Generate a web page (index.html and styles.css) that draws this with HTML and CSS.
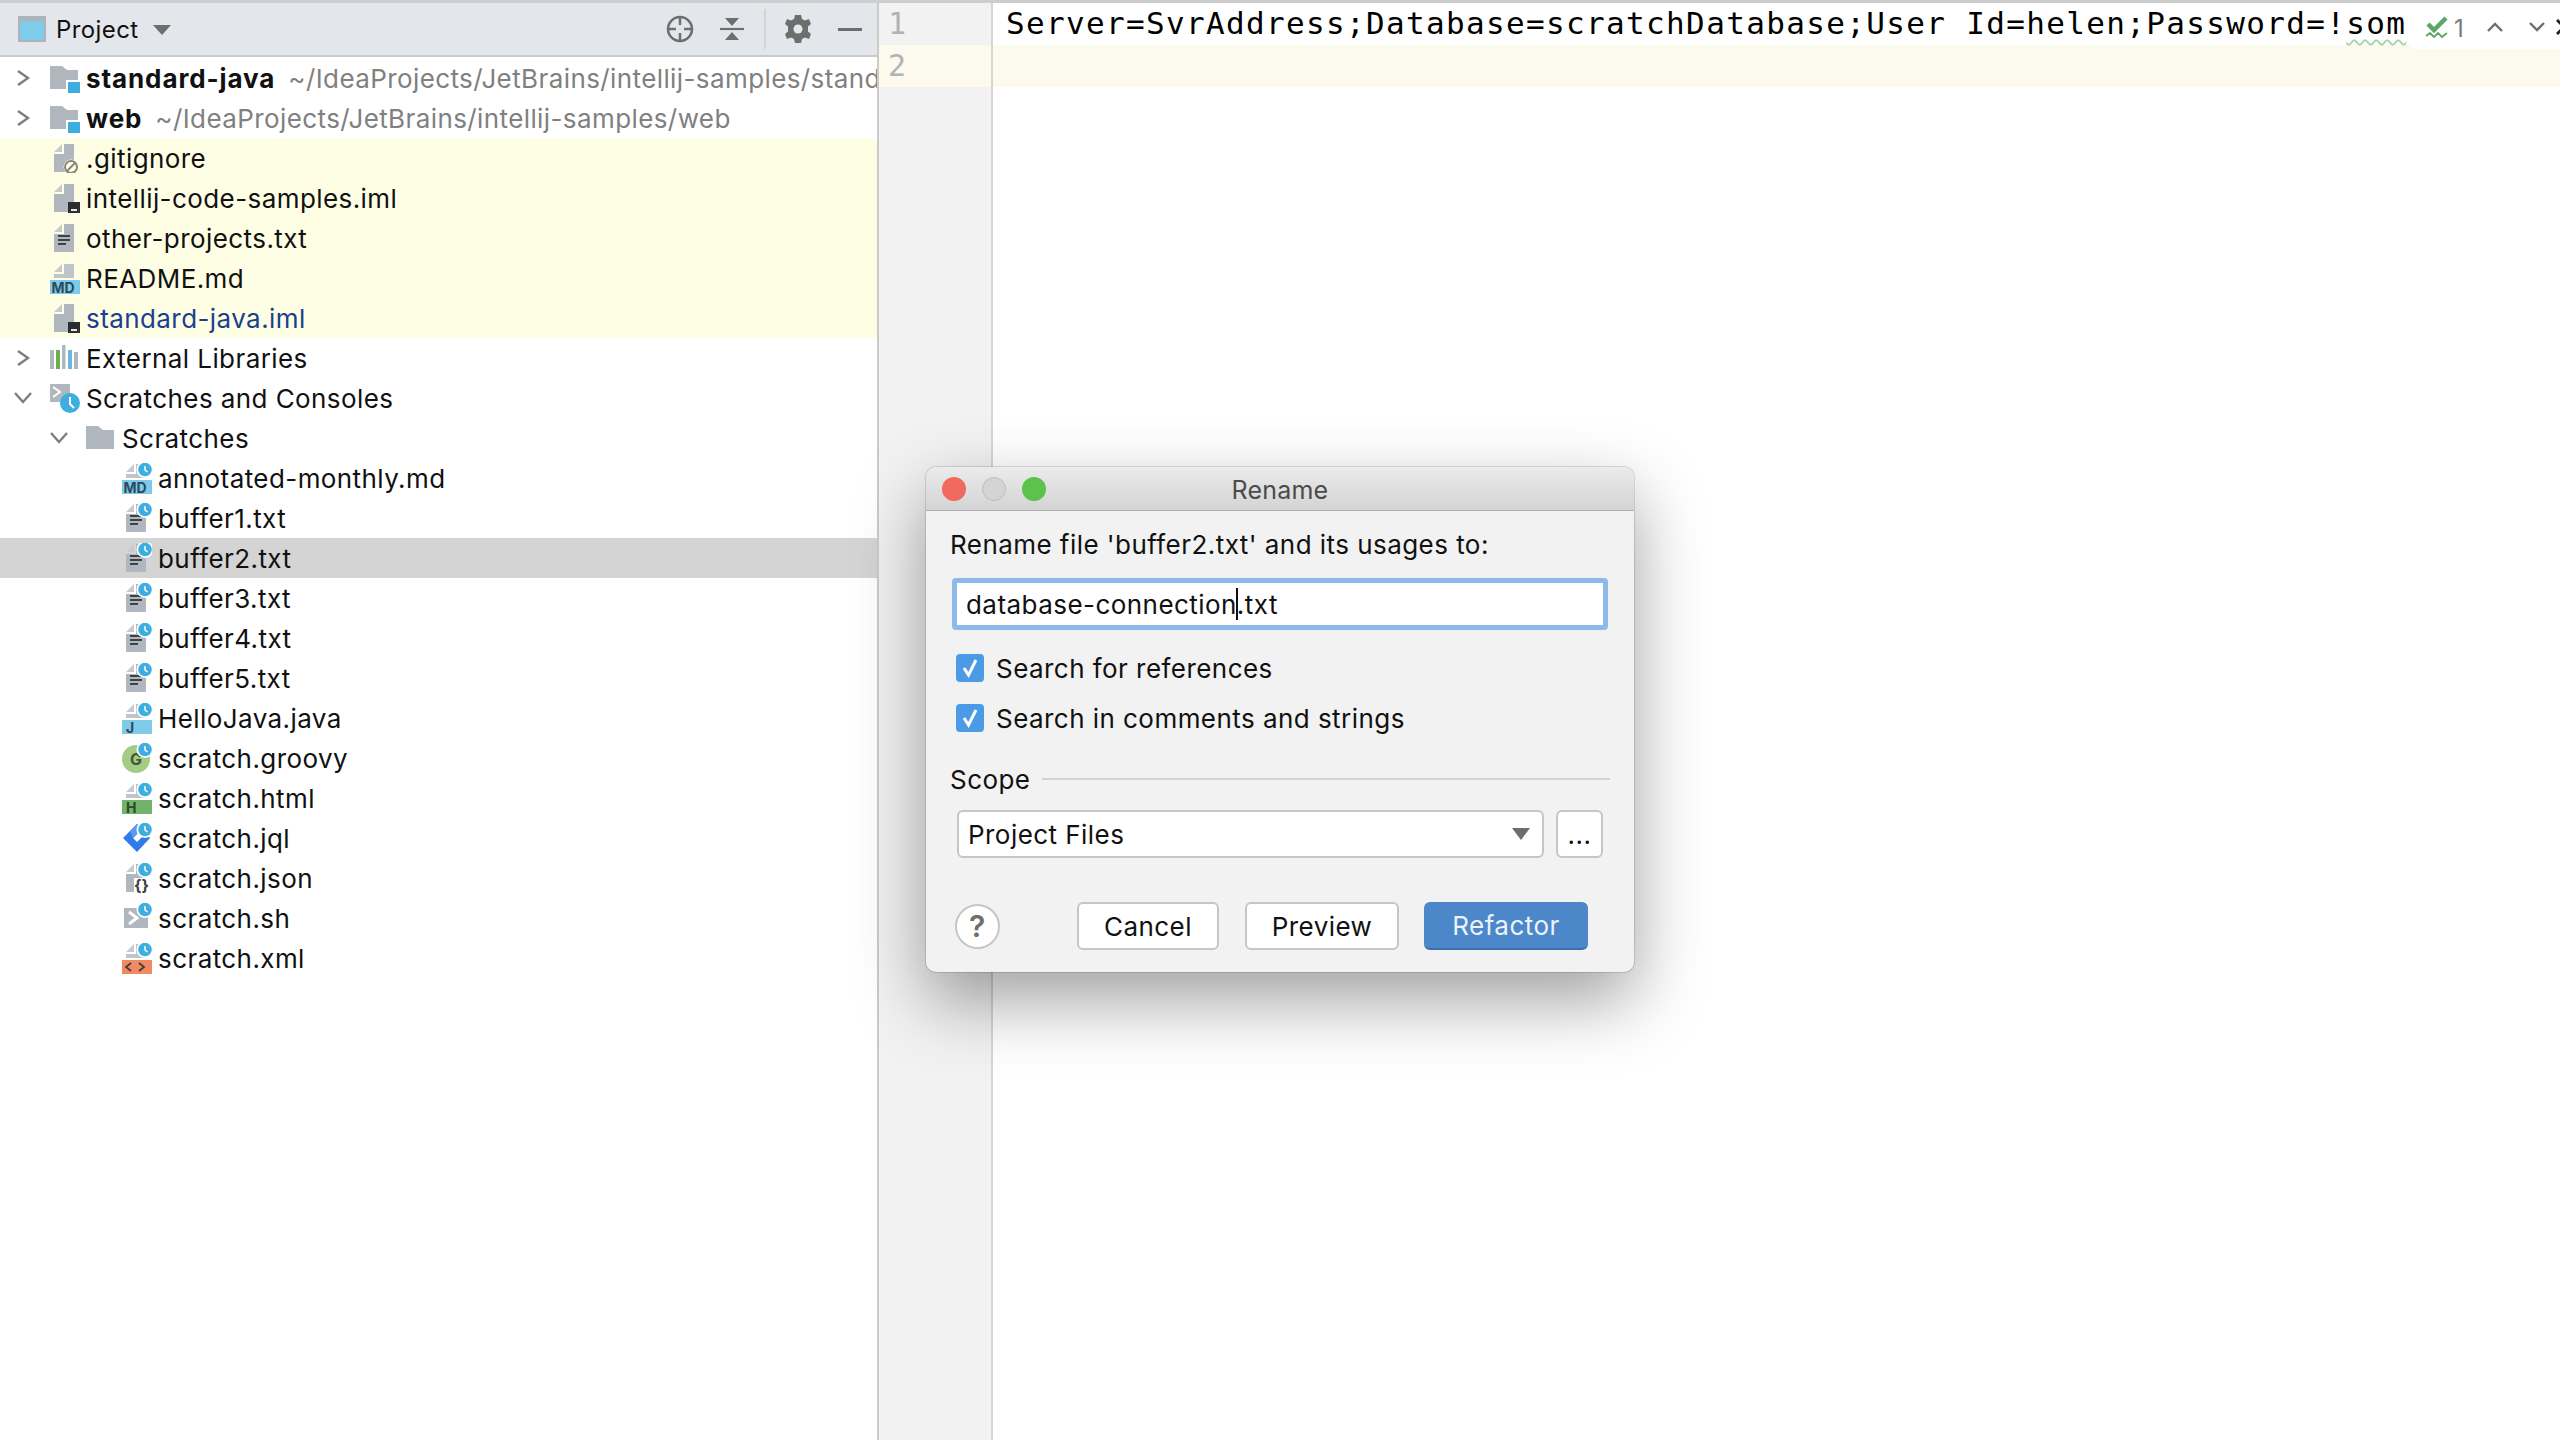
FILE: index.html
```html
<!DOCTYPE html>
<html lang="en">
<head>
<meta charset="utf-8">
<title>Rename</title>
<link rel="stylesheet" href="styles.css">
</head>
<body>
<svg class="defs" width="0" height="0" aria-hidden="true">
  <defs>
    <symbol id="arrow-r" viewBox="0 0 30 30"><path d="M4 8L14 15L4 22" fill="none" stroke="#7b7f84" stroke-width="2.4"/></symbol>
    <symbol id="arrow-d" viewBox="0 0 30 30"><path d="M1 10L9 19L17 10" fill="none" stroke="#7b7f84" stroke-width="2.4"/></symbol>
    <symbol id="folder" viewBox="0 0 30 30"><path d="M0 3H12L17 7H28V26H0Z" fill="#b1b7be"/></symbol>
    <symbol id="module" viewBox="0 0 30 30"><path d="M0 3H12L17 7H28V26H0Z" fill="#b1b7be"/><rect x="16" y="17" width="15" height="15" fill="#fff"/><rect x="18" y="19" width="12" height="12" fill="#3eaee0"/></symbol>
    <symbol id="doc" viewBox="0 0 30 30"><path d="M4 9L12 1V9Z" fill="#c7cbd0"/><path d="M14 1H24V29H4V11H14Z" fill="#b1b7be"/></symbol>
    <symbol id="doc-top" viewBox="0 0 30 30"><path d="M4 9L12 1V9Z" fill="#c7cbd0"/><path d="M14 1H24V15H4V11H14Z" fill="#c0c5ca"/></symbol>
    <symbol id="lines" viewBox="0 0 30 30"><path d="M8 13H20M8 17H20M8 21H16" stroke="#3f4246" stroke-width="2"/></symbol>
    <symbol id="iml-badge" viewBox="0 0 30 30"><rect x="18" y="19" width="12" height="12" fill="#2b2d30"/><rect x="21" y="26" width="6" height="2" fill="#e8e8e8"/></symbol>
    <symbol id="ignore-badge" viewBox="0 0 30 30"><circle cx="21" cy="24" r="7.5" fill="#fffde8"/><circle cx="21" cy="24" r="6" fill="none" stroke="#8a8678" stroke-width="2"/><path d="M17 28L25 20" stroke="#8a8678" stroke-width="2"/></symbol>
    <symbol id="clock" viewBox="0 0 30 30"><circle cx="23" cy="6.500" r="8.500" fill="#fff"/><circle cx="23" cy="6.500" r="6.800" fill="#3eaee0"/><path d="M23 3V7L25.500 9" fill="none" stroke="#fff" stroke-width="1.500"/></symbol>
    <symbol id="libs" viewBox="0 0 30 30"><rect x="0" y="7" width="4" height="19" fill="#b1b7be"/><rect x="6" y="7" width="4" height="19" fill="#6cb04e"/><rect x="12" y="2" width="3.500" height="24" fill="#b1b7be"/><rect x="18" y="7" width="4" height="19" fill="#6fb6dc"/><rect x="24" y="9" width="4" height="17" fill="#b1b7be"/></symbol>
    <symbol id="scratch-root" viewBox="0 0 30 30"><rect x="0" y="1" width="20" height="18" fill="#b1b7be"/><path d="M3 4L10 9L3 14" fill="none" stroke="#fff" stroke-width="2"/><circle cx="20" cy="20" r="10" fill="#3eaee0"/><path d="M20 14V21L24 25" fill="none" stroke="#fff" stroke-width="2"/></symbol>
    <symbol id="jql" viewBox="0 0 30 30"><path d="M15 1L1 15L15 29L28 15L24 10L15 19L11 15L21 5Z" fill="#2f7be8"/><path d="M15 1L8 8L11 15L21 5Z" fill="#5a9bf0"/></symbol>
    <symbol id="sh" viewBox="0 0 30 30"><rect x="2" y="5" width="24" height="20" fill="#b1b7be"/><path d="M7 9L15 15L7 21" fill="none" stroke="#fff" stroke-width="3"/></symbol>
  </defs>
</svg>

<main class="ide">
  <aside class="project">
    <header class="tool-header">
      <svg class="project-icon" viewBox="0 0 28 26"><rect x="1" y="1" width="26" height="24" fill="#7fcdea" stroke="#afb4ba" stroke-width="2"/><rect x="0" y="0" width="28" height="5" fill="#afb4ba"/></svg>
      <span class="tool-title">Project</span>
      <svg class="tool-caret" viewBox="0 0 18 12"><path d="M0 1H18L9 11Z" fill="#6e6e6e"/></svg>
      <div class="tool-actions">
        <svg class="act act-target" viewBox="0 0 28 28"><circle cx="14" cy="14" r="12" fill="none" stroke="#6e6e6e" stroke-width="2.500"/><path d="M14 1V10M14 18V27M1 14H10M18 14H27" stroke="#6e6e6e" stroke-width="2.500"/></svg>
        <svg class="act act-collapse" viewBox="0 0 24 24"><path d="M0 12H24" stroke="#6e6e6e" stroke-width="2.200"/><path d="M5 1H19L12 9Z M5 23H19L12 15Z" fill="#6e6e6e"/></svg>
        <span class="act-sep"></span>
        <svg class="act act-gear" viewBox="0 0 26 28"><path d="M10 0H16L17 4L20 5.500L24 4L26 9L23 11.500V16.500L26 19L24 24L20 22.500L17 24L16 28H10L9 24L6 22.500L2 24L0 19L3 16.500V11.500L0 9L2 4L6 5.500L9 4Z" fill="#6e6e6e"/><circle cx="13" cy="14" r="4.500" fill="#e3e6ea"/></svg>
        <svg class="act act-min" viewBox="0 0 24 4"><rect width="24" height="3" y="0" fill="#6e6e6e"/></svg>
      </div>
    </header>

    <ul class="tree">
      <li class="row"><svg class="arrow"><use href="#arrow-r"/></svg><svg class="ico"><use href="#module"/></svg><b class="name">standard-java</b><span class="path">~/IdeaProjects/JetBrains/intellij-samples/stand</span></li>
      <li class="row"><svg class="arrow"><use href="#arrow-r"/></svg><svg class="ico"><use href="#module"/></svg><b class="name">web</b><span class="path">~/IdeaProjects/JetBrains/intellij-samples/web</span></li>
      <li class="row ignored"><span class="indent"></span><svg class="ico"><use href="#doc"/><use href="#ignore-badge"/></svg><span class="name">.gitignore</span></li>
      <li class="row ignored"><span class="indent"></span><svg class="ico"><use href="#doc"/><use href="#iml-badge"/></svg><span class="name">intellij-code-samples.iml</span></li>
      <li class="row ignored"><span class="indent"></span><svg class="ico"><use href="#doc"/><use href="#lines"/></svg><span class="name">other-projects.txt</span></li>
      <li class="row ignored"><span class="indent"></span><svg class="ico" viewBox="0 0 30 30"><use href="#doc-top"/><rect y="17" width="30" height="14" fill="#7dcbe8"/><text class="ico-label" x="1.500" y="29.500">MD</text></svg><span class="name">README.md</span></li>
      <li class="row ignored"><span class="indent"></span><svg class="ico"><use href="#doc"/><use href="#iml-badge"/></svg><span class="name modified">standard-java.iml</span></li>
      <li class="row"><svg class="arrow"><use href="#arrow-r"/></svg><svg class="ico"><use href="#libs"/></svg><span class="name">External Libraries</span></li>
      <li class="row"><svg class="arrow"><use href="#arrow-d"/></svg><svg class="ico"><use href="#scratch-root"/></svg><span class="name">Scratches and Consoles</span></li>
      <li class="row"><span class="indent"></span><svg class="arrow"><use href="#arrow-d"/></svg><svg class="ico"><use href="#folder"/></svg><span class="name">Scratches</span></li>
      <li class="row leaf"><svg class="ico" viewBox="0 0 30 30"><use href="#doc-top"/><rect y="17" width="30" height="14" fill="#7dcbe8"/><text class="ico-label" x="1.500" y="29.500">MD</text><use href="#clock"/></svg><span class="name">annotated-monthly.md</span></li>
      <li class="row leaf"><svg class="ico"><use href="#doc"/><use href="#lines"/><use href="#clock"/></svg><span class="name">buffer1.txt</span></li>
      <li class="row leaf selected"><svg class="ico"><use href="#doc"/><use href="#lines"/><use href="#clock"/></svg><span class="name">buffer2.txt</span></li>
      <li class="row leaf"><svg class="ico"><use href="#doc"/><use href="#lines"/><use href="#clock"/></svg><span class="name">buffer3.txt</span></li>
      <li class="row leaf"><svg class="ico"><use href="#doc"/><use href="#lines"/><use href="#clock"/></svg><span class="name">buffer4.txt</span></li>
      <li class="row leaf"><svg class="ico"><use href="#doc"/><use href="#lines"/><use href="#clock"/></svg><span class="name">buffer5.txt</span></li>
      <li class="row leaf"><svg class="ico" viewBox="0 0 30 30"><use href="#doc-top"/><rect y="17" width="30" height="14" fill="#7dcbe8"/><text class="ico-label" x="4" y="29.500">J</text><use href="#clock"/></svg><span class="name">HelloJava.java</span></li>
      <li class="row leaf"><svg class="ico" viewBox="0 0 30 30"><circle cx="14" cy="16" r="14" fill="#a5cc85"/><text class="ico-label big" x="8" y="22">G</text><use href="#clock"/></svg><span class="name">scratch.groovy</span></li>
      <li class="row leaf"><svg class="ico" viewBox="0 0 30 30"><use href="#doc-top"/><rect y="17" width="30" height="14" fill="#72b36b"/><text class="ico-label dark" x="4" y="29.500">H</text><use href="#clock"/></svg><span class="name">scratch.html</span></li>
      <li class="row leaf"><svg class="ico"><use href="#jql"/><use href="#clock"/></svg><span class="name">scratch.jql</span></li>
      <li class="row leaf"><svg class="ico" viewBox="0 0 30 30"><use href="#doc"/><rect x="12" y="15" width="18" height="15" fill="#fff"/><text class="ico-label braces" x="12" y="28">{}</text><use href="#clock"/></svg><span class="name">scratch.json</span></li>
      <li class="row leaf"><svg class="ico"><use href="#sh"/><use href="#clock"/></svg><span class="name">scratch.sh</span></li>
      <li class="row leaf"><svg class="ico" viewBox="0 0 30 30"><use href="#doc-top"/><rect y="17" width="30" height="14" fill="#f08a62"/><path d="M9 20L4 24L9 28M17 20L22 24L17 28" fill="none" stroke="#4a3a34" stroke-width="1.800"/><use href="#clock"/></svg><span class="name">scratch.xml</span></li>
    </ul>
  </aside>

  <section class="editor">
    <div class="gutter">
      <div class="lnum">1</div>
      <div class="lnum current">2</div>
    </div>
    <div class="code">
      <div class="line"><span>Server=SvrAddress;Database=scratchDatabase;User Id=helen;Password=!<span class="weak">som</span></span></div>
      <div class="line current"></div>
      <div class="inspect">
        <svg class="insp-check" viewBox="0 0 24 24"><path d="M3 8L9 14L21 2" fill="none" stroke="#59a869" stroke-width="4.500"/><path d="M1 20L5 17L9 21L13 17L17 21L22 17" fill="none" stroke="#59a869" stroke-width="1.800"/></svg>
        <span class="insp-count">1</span>
        <svg class="insp-nav" viewBox="0 0 16 10"><path d="M1 9L8 2L15 9" fill="none" stroke="#6e6e6e" stroke-width="2.400"/></svg>
        <svg class="insp-nav" viewBox="0 0 16 10"><path d="M1 1L8 8L15 1" fill="none" stroke="#6e6e6e" stroke-width="2.400"/></svg>
        <svg class="insp-close" viewBox="0 0 16 16"><path d="M1 1L15 15M15 1L1 15" stroke="#222" stroke-width="3"/></svg>
      </div>
    </div>
  </section>

  <div class="dialog">
    <div class="titlebar">
      <span class="light red"></span><span class="light grey"></span><span class="light green"></span>
      <span class="dlg-title">Rename</span>
    </div>
    <div class="dlg-body">
      <div class="prompt">Rename file 'buffer2.txt' and its usages to:</div>
      <div class="input"><span>database-connection</span><i class="caret"></i><span>.txt</span></div>
      <label class="check"><svg class="box" viewBox="0 0 28 28"><rect width="28" height="28" rx="4" fill="#4a9ae6"/><path d="M8 14L12.500 21L20 6" fill="none" stroke="#fff" stroke-width="3"/></svg>Search for references</label>
      <label class="check"><svg class="box" viewBox="0 0 28 28"><rect width="28" height="28" rx="4" fill="#4a9ae6"/><path d="M8 14L12.500 21L20 6" fill="none" stroke="#fff" stroke-width="3"/></svg>Search in comments and strings</label>
      <div class="scope"><span>Scope</span><i class="scope-line"></i></div>
      <div class="scope-row">
        <div class="combo"><span>Project Files</span><svg class="combo-caret" viewBox="0 0 18 12"><path d="M0 0H18L9 12Z" fill="#6e6e6e"/></svg></div>
        <div class="more">...</div>
      </div>
      <div class="buttons">
        <div class="help">?</div>
        <div class="btn cancel">Cancel</div>
        <div class="btn preview">Preview</div>
        <div class="btn primary">Refactor</div>
      </div>
    </div>
  </div>
</main>
</body>
</html>
```

FILE: styles.css
```css
* { box-sizing: border-box; }
html, body { margin: 0; height: 100%; }
body { background: #fff; color: #111; font-family: Inter, "Noto Sans", sans-serif; font-size: 26px; overflow: hidden; }
.defs { display: block; height: 0; }

.ide { display: flex; width: 2560px; height: 1440px; position: relative; border-top: 3px solid #cdcdcd; overflow: hidden; }

.project { width: 879px; flex: none; border-right: 2px solid #cbcbcb; display: flex; flex-direction: column; overflow: hidden; }
.tool-header { height: 54px; flex: none; display: flex; align-items: center; background: #e3e6ea; border-bottom: 2px solid #c9c9c9; padding-left: 18px; }
.project-icon { width: 28px; height: 26px; margin-right: 10px; }
.tool-title { font-size: 24px; letter-spacing: .4px; }
.tool-caret { width: 18px; height: 12px; margin-left: 14px; margin-top: 2px; }
.tool-actions { margin-left: auto; display: flex; align-items: center; }
.act-target { width: 28px; height: 28px; margin-right: 26px; }
.act-collapse { width: 24px; height: 24px; margin-right: 20px; }
.act-sep { width: 2px; height: 40px; background: #d2d4d7; margin-right: 19px; }
.act-gear { width: 26px; height: 28px; margin-right: 27px; }
.act-min { width: 24px; height: 4px; margin-right: 15px; margin-top: 2px; }

.tree { list-style: none; margin: 1px 0 0; padding: 0; }
.row { height: 40px; display: flex; align-items: center; padding-left: 14px; white-space: nowrap; }
.leaf { padding-left: 122px; }
.ignored { background: #fefee4; }
.selected { background: #d4d4d4; }
.indent { width: 36px; flex: none; }
.arrow { width: 30px; height: 30px; flex: none; margin-right: 6px; }
.ico { width: 30px; height: 30px; flex: none; margin-right: 6px; overflow: visible; }
.ico-label { font: 700 14px Inter, sans-serif; fill: #2d4a5c; }
.ico-label.big { font-size: 16px; fill: #3d5a33; }
.ico-label.dark { fill: #2c4a2a; }
.ico-label.braces { font-size: 16px; fill: #3f4246; }
.name { letter-spacing: .42px; }
b.name { letter-spacing: .9px; }
.modified { color: #1a3f8f; }
.path { margin-left: 13px; color: #808080; letter-spacing: .4px; }

.editor { flex: 1; display: flex; min-width: 0; }
.gutter { width: 114px; flex: none; background: #f2f2f2; border-right: 2px solid #d6d6d6; }
.lnum { height: 42px; padding-left: 9px; font: 30px/42px "DejaVu Sans Mono", monospace; color: #aeb3b8; }
.lnum.current { background: #fcfaed; }
.code { flex: 1; position: relative; min-width: 0; overflow: hidden; }
.line { height: 42px; padding-left: 13px; font: 31px/40px "DejaVu Sans Mono", monospace; letter-spacing: 1.34px; white-space: nowrap; color: #000; }
.line.current { background: #fcfaed; }
.weak { text-decoration: underline wavy #a9d3ae 2px; text-underline-offset: 5px; }
.inspect { position: absolute; top: 0; right: 0; height: 46px; width: 153px; background: #fff; border-radius: 0 0 0 10px; display: flex; align-items: center; padding-left: 18px; }
.inspect > * { flex: none; }
.insp-check { width: 24px; height: 24px; margin-top: 4px; }
.insp-count { font-size: 24px; color: #7a7a7a; margin-left: 5px; width: 33px; margin-top: 4px; }
.insp-nav { width: 16px; height: 10px; margin-right: 26px; margin-top: 2px; }
.insp-close { width: 16px; height: 16px; margin-left: -15px; margin-top: 2px; }

.dialog { position: absolute; left: 926px; top: 464px; width: 708px; height: 505px; background: #f2f2f2; border-radius: 10px; box-shadow: 0 0 0 1px rgba(0,0,0,.12), 0 28px 70px rgba(0,0,0,.38); display: flex; flex-direction: column; overflow: hidden; letter-spacing: .45px; }
.titlebar { height: 44px; flex: none; display: flex; align-items: center; gap: 16px; padding: 1px 0 0 16px; position: relative; background: linear-gradient(#ebebeb, #d4d4d4); border-bottom: 1px solid #adadad; }
.light { width: 24px; height: 24px; border-radius: 50%; }
.red { background: #f0685e; }
.grey { background: #d4d4d4; border: 1px solid #bdbdbd; }
.green { background: #5cc24a; }
.dlg-title { position: absolute; left: 0; right: 0; top: 8px; text-align: center; font-size: 25px; line-height: 30px; color: #4b4b4b; letter-spacing: .2px; }

.dlg-body { flex: 1; display: flex; flex-direction: column; padding: 0 24px 0; }
.prompt { margin-top: 18px; line-height: 32px; }
.input { margin: 17px 0 0 2px; width: 656px; height: 52px; display: flex; align-items: center; padding-left: 9px; background: #fff; border: 5px solid #8fb9ea; border-radius: 4px; }
.caret { width: 2px; height: 32px; background: #111; margin: 0 -1px; }
.check { display: flex; align-items: center; height: 28px; margin-left: 6px; }
.input + .check { margin-top: 24px; }
.check + .check { margin-top: 22px; }
.box { width: 28px; height: 28px; margin-right: 12px; }
.scope { display: flex; align-items: center; gap: 12px; margin-top: 30px; height: 34px; width: 660px; }
.scope-line { flex: 1; height: 2px; background: #d3d3d3; }
.scope-row { display: flex; margin: 14px 0 0 7px; gap: 12px; }
.combo { width: 587px; height: 48px; display: flex; align-items: center; justify-content: space-between; padding: 0 10px 0 9px; background: #fff; border: 2px solid #c6c6c6; border-radius: 6px; }
.combo-caret { width: 18px; height: 12px; margin-right: 2px; }
.more { width: 47px; height: 48px; background: #fff; border: 2px solid #c6c6c6; border-radius: 6px; text-align: center; line-height: 46px; }
.buttons { display: flex; align-items: center; margin: 44px 0 0 5px; }
.help { width: 45px; height: 45px; border-radius: 50%; background: #fff; border: 2px solid #c6c6c6; text-align: center; font-size: 30px; line-height: 41px; color: #6e6e6e; font-weight: 600; margin-right: 77px; }
.btn { height: 48px; border-radius: 6px; background: #fff; border: 2px solid #c6c6c6; display: flex; align-items: center; justify-content: center; }
.cancel { width: 142px; margin-right: 26px; }
.preview { width: 154px; margin-right: 25px; }
.primary { width: 164px; background: #4c87c9; border: none; border-bottom: 2px solid #3a6fae; color: #eaf2fb; }
```
